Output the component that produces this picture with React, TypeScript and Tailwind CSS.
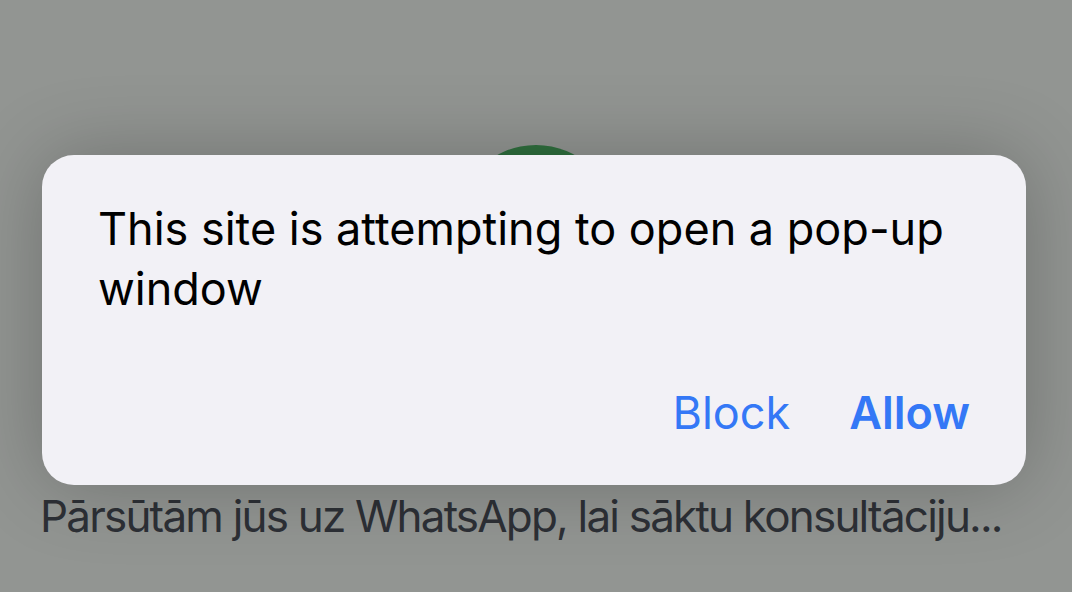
export default function App() {
  return (
    <div className="relative h-[592px] w-[1072px] overflow-hidden bg-[#929592] font-['Inter',sans-serif]">
      {/* page underneath the alert */}
      <div className="flex flex-col items-center pt-[145px]">
        <div className="h-[160px] w-[160px] rounded-full bg-[#2f6f3e]" />
      </div>
      <p className="absolute left-[40px] top-[488px] whitespace-nowrap text-[44px] leading-[56px] tracking-[-1.8px] text-[#2d3036]">
        Pārsūtām jūs uz WhatsApp, lai sāktu konsultāciju...
      </p>

      {/* popup alert */}
      <div className="absolute left-[42px] top-[155px] flex h-[330px] w-[984px] flex-col rounded-[32px] bg-[#f2f1f6] px-[56px] pb-[44px] pt-[44px] shadow-[0_0_80px_rgba(0,0,0,0.24)]">
        <p className="text-[45px] leading-[60px] text-black">
          This site is attempting to open a pop-up window
        </p>
        <div className="mt-auto flex justify-end gap-[59px] text-[45px] leading-[56px] text-[#3478f6]">
          <button type="button">Block</button>
          <button type="button" className="font-semibold">Allow</button>
        </div>
      </div>
    </div>
  )
}
